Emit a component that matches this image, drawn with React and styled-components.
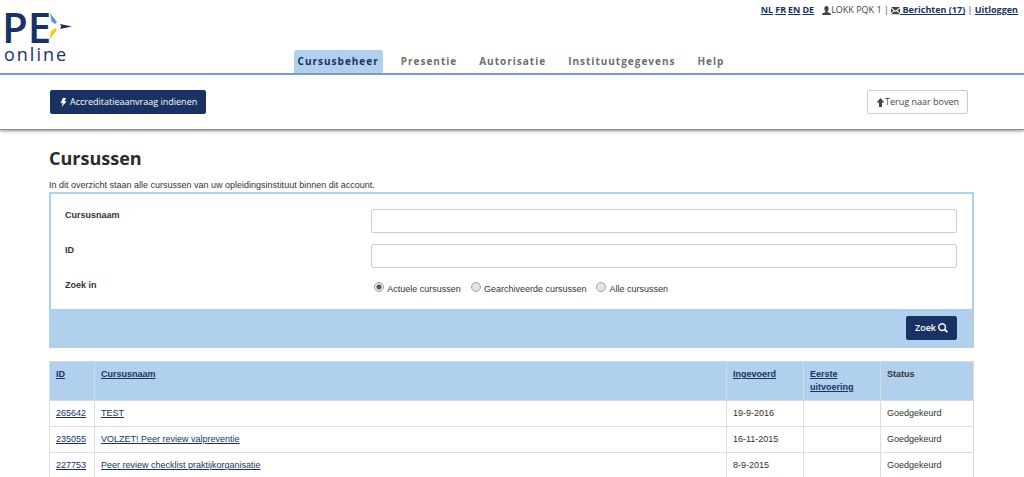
import React from "react";
import styled, { createGlobalStyle } from "styled-components";

const navy = "#1a3263";
const sky = "#b1d0ee";
const headFont = `"Open Sans", "Noto Sans", sans-serif`;

const GlobalStyle = createGlobalStyle`
  *, *::before, *::after { box-sizing: border-box; }
  body {
    margin: 0;
    background: #fff;
    color: #333;
    font-family: "Liberation Sans", Arial, sans-serif;
    font-size: 9px;
    line-height: 13px;
  }
`;

const Header = styled.header`
  display: flex;
  flex-direction: column;
  position: relative;
  border-bottom: 2px solid #7b9ccb;
`;

const Logo = styled.a`
  position: absolute;
  left: 4px;
  top: 6px;
  color: ${navy};
  text-decoration: none;
  svg { display: block; overflow: visible; }
`;

const UserBar = styled.div`
  display: flex;
  justify-content: flex-end;
  align-items: center;
  height: 20px;
  padding-right: 6px;
  font: 9px/20px ${headFont};
  color: #444;
  white-space: pre;
`;

const Languages = styled.div`
  display: flex;
  gap: 2px;
  margin-right: 8px;
`;

const BarLink = styled.a`
  color: ${navy};
  font-weight: 700;
`;

const Nav = styled.nav`
  display: flex;
  justify-content: center;
  gap: 14px;
  margin-top: 30px;
  padding-right: 2px;
`;

const NavItem = styled.a`
  height: 23px;
  padding: 0 4px;
  border-radius: 3px 3px 0 0;
  background: ${(p) => (p.$active ? sky : "transparent")};
  color: ${(p) => (p.$active ? navy : "#6e6e6e")};
  font: 700 10px/23px ${headFont};
  letter-spacing: 1px;
  text-decoration: none;
`;

const ActionBar = styled.div`
  display: flex;
  justify-content: space-between;
  align-items: flex-start;
  padding: 15px 56px 15px 50px;
  border-bottom: 1px solid #8c8c8c;
  box-shadow: 0 1px 3px rgba(0, 0, 0, 0.45);
`;

const Button = styled.button`
  display: inline-flex;
  align-items: center;
  justify-content: center;
  gap: ${(p) => p.$gap || 0}px;
  height: 24px;
  padding: 0 8px;
  border: 1px solid ${(p) => (p.$light ? "#ccc" : navy)};
  border-radius: 2px;
  background: ${(p) => (p.$light ? "#fff" : navy)};
  color: ${(p) => (p.$light ? "#444" : "#fff")};
  font: ${(p) => (p.$strong ? 600 : 400)} 9px/12px ${headFont};
  white-space: nowrap;
`;

const Main = styled.main`
  padding: 16px 50px 0 49px;
`;

const Title = styled.h1`
  margin: 0;
  color: #2b2b2b;
  font: 700 18px/24px ${headFont};
`;

const Intro = styled.p`
  margin: 9px 0 0;
`;

const SearchForm = styled.form`
  border: 2px solid ${sky};
  margin-bottom: 13px;
`;

const Fields = styled.div`
  display: grid;
  grid-template-columns: 34fr 65fr;
  row-gap: 11px;
  padding: 15px 15px 8px 14px;
`;

const FieldName = styled.label`
  font-weight: 700;
`;

const TextInput = styled.input`
  width: 100%;
  height: 24px;
  border: 1px solid #ccc;
  border-radius: 2px;
  padding: 0 6px;
  font: inherit;
`;

const Choices = styled.div`
  display: flex;
  gap: 10px;
  padding: 2px 3px 0;
  height: 22px;
`;

const Choice = styled.label`
  display: flex;
  gap: 3px;
  line-height: 17px;
`;

const Radio = styled.input`
  appearance: none;
  width: 10px;
  height: 10px;
  margin: 1px 0 0;
  border: 1px solid #a2a2a2;
  border-radius: 50%;
  background: #e4e4e4;
  &:checked { background: radial-gradient(circle, #555 0 2px, #ececec 3px); }
`;

const FormFooter = styled.div`
  display: flex;
  justify-content: flex-end;
  padding: 7px 15px 6px;
  background: ${sky};
`;

const Table = styled.table`
  width: 100%;
  table-layout: fixed;
  border-collapse: collapse;
`;

const HeadCell = styled.th`
  height: 39px;
  padding: 6px 6px 5px;
  border: 1px solid #d3dbe3;
  background: ${sky};
  text-align: left;
  vertical-align: top;
  width: ${(p) => p.$width || "auto"};
`;

const Cell = styled.td`
  height: 26px;
  padding: 6px;
  border: 1px solid #ddd;
  vertical-align: top;
`;

const TextLink = styled.a`
  color: ${navy};
`;

const LogoMark = () => (
  <svg width="70" height="60" viewBox="0 0 70 60" role="img" aria-label="PE online">
    <g fill={navy} fontFamily="'Open Sans', sans-serif">
      <text x="-2" y="37" fontSize="42" fontWeight="600">PE</text>
      <text x="0" y="55" fontSize="18" letterSpacing="2">online</text>
    </g>
    <path d="M46 7 L53 16 L51 18 L47.500 15.500 Z" fill="#5b94d8" />
    <path d="M45.500 34 L47 25 L51 22 L53 24 Z" fill="#f2cc1d" />
    <path d="M56 18 L68 20.500 L56 23 Q58 20.500 56 18 Z" fill={navy} />
  </svg>
);

const Icon = ({ size = 9, d, rule }) => (
  <svg width={size} height={size} viewBox="0 0 14 14" fill="currentColor" fillRule={rule} aria-hidden="true">
    <path d={d} />
  </svg>
);

const icons = {
  bolt: "M6 0 H11 L8.500 5 H12 L4 14 L6 8 H2.500 Z",
  user: "M7 0 C4.500 0 3.500 2 3.700 4.500 C3.900 6.500 4.600 7.500 5.300 8.300 V9.500 L1 11.200 Q0 11.800 0 14 H14 Q14 11.800 13 11.200 L8.700 9.500 V8.300 C9.400 7.500 10.100 6.500 10.300 4.500 C10.500 2 9.500 0 7 0 Z",
  mail: "M0 1.500 H14 L7 7.500 Z M0 3.500 L4 7 L0 11 Z M14 3.500 L10 7 L14 11 Z M5 8 L7 9.500 L9 8 L14 13 H0 Z",
  up: "M7 0 L13 7 H9.300 V14 H4.700 V7 H1 Z",
  search: "M5.700 0 A5.700 5.700 0 1 0 8.800 10.500 L12.200 13.800 L14 12 L10.500 8.700 A5.700 5.700 0 0 0 5.700 0 Z M5.700 2 A3.700 3.700 0 1 1 5.700 9.400 A3.700 3.700 0 0 1 5.700 2 Z",
};

const menu = ["Cursusbeheer", "Presentie", "Autorisatie", "Instituutgegevens", "Help"];
const scopes = ["Actuele cursussen", "Gearchiveerde cursussen", "Alle cursussen"];
const courses = [
  { id: "265642", name: "TEST", entered: "19-9-2016" },
  { id: "235055", name: "VOLZET! Peer review valpreventie", entered: "16-11-2015" },
  { id: "227753", name: "Peer review checklist praktijkorganisatie", entered: "8-9-2015" },
];

export default function App() {
  return (
    <>
      <GlobalStyle />
      <Header>
        <Logo href="#"><LogoMark /></Logo>
        <UserBar>
          <Languages>
            {["NL", "FR", "EN", "DE"].map((l) => <BarLink href="#" key={l}>{l}</BarLink>)}
          </Languages>
          <Icon d={icons.user} />
          <span>LOKK PQK 1 | </span>
          <Icon d={icons.mail} />
          <BarLink href="#"> Berichten (17)</BarLink>
          <span> | </span>
          <BarLink href="#">Uitloggen</BarLink>
        </UserBar>
        <Nav>
          {menu.map((m, i) => <NavItem href="#" key={m} $active={i === 0}>{m}</NavItem>)}
        </Nav>
      </Header>
      <ActionBar>
        <Button type="button" $gap={2}><Icon d={icons.bolt} />Accreditatieaanvraag indienen</Button>
        <Button type="button" $light><Icon d={icons.up} />Terug naar boven</Button>
      </ActionBar>
      <Main>
        <Title>Cursussen</Title>
        <Intro>In dit overzicht staan alle cursussen van uw opleidingsinstituut binnen dit account.</Intro>
        <SearchForm onSubmit={(e) => e.preventDefault()}>
          <Fields>
            <FieldName htmlFor="naam">Cursusnaam</FieldName>
            <TextInput id="naam" type="text" />
            <FieldName htmlFor="nummer">ID</FieldName>
            <TextInput id="nummer" type="text" />
            <FieldName as="span" id="zoekin">Zoek in</FieldName>
            <Choices role="radiogroup" aria-labelledby="zoekin">
              {scopes.map((s, i) => (
                <Choice key={s}><Radio type="radio" name="scope" defaultChecked={i === 0} />{s}</Choice>
              ))}
            </Choices>
          </Fields>
          <FormFooter>
            <Button type="submit" $strong $gap={2}>Zoek<Icon size={10} d={icons.search} rule="evenodd" /></Button>
          </FormFooter>
        </SearchForm>
        <Table>
          <thead>
            <tr>
              <HeadCell $width="45px"><TextLink href="#">ID</TextLink></HeadCell>
              <HeadCell><TextLink href="#">Cursusnaam</TextLink></HeadCell>
              <HeadCell $width="77px"><TextLink href="#">Ingevoerd</TextLink></HeadCell>
              <HeadCell $width="77px"><TextLink href="#">Eerste uitvoering</TextLink></HeadCell>
              <HeadCell $width="93px">Status</HeadCell>
            </tr>
          </thead>
          <tbody>
            {courses.map((c) => (
              <tr key={c.id}>
                <Cell><TextLink href="#">{c.id}</TextLink></Cell>
                <Cell><TextLink href="#">{c.name}</TextLink></Cell>
                <Cell>{c.entered}</Cell>
                <Cell />
                <Cell>Goedgekeurd</Cell>
              </tr>
            ))}
          </tbody>
        </Table>
      </Main>
    </>
  );
}
